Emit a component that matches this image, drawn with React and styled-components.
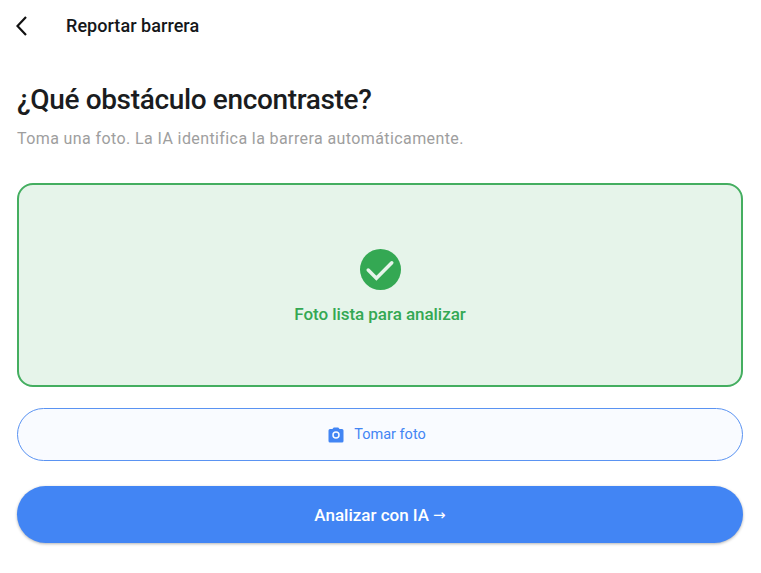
import React from 'react';
import styled, { createGlobalStyle } from 'styled-components';

const Global = createGlobalStyle`
  html, body { margin: 0; padding: 0; background: #fff; }
  body { font-family: Roboto, sans-serif; }
  * { box-sizing: border-box; }
`;

const Page = styled.div`
  width: 761px;
  height: 573px;
  overflow: hidden;
  display: flex;
  flex-direction: column;
  padding: 0 18px 0 17px;
  background: #fff;
`;

const TopBar = styled.header`
  height: 51px;
  display: flex;
  align-items: center;
  gap: 37px;
`;

const BackButton = styled.button`
  width: 12px;
  height: 24px;
  padding: 0;
  border: 0;
  background: none;
  color: #111;
`;

const BackIcon = styled.svg`
  display: block;
  margin-left: -1px;
`;

const TopTitle = styled.span`
  font-size: 18px;
  letter-spacing: 0.05px;
  font-weight: 500;
  color: #15171a;
`;

const Heading = styled.h1`
  margin: 30px 0 0;
  font-size: 28px;
  line-height: 38px;
  letter-spacing: -0.35px;
  font-weight: 500;
  color: #1a1c20;
`;

const Subtitle = styled.p`
  margin: 9px 0 0;
  font-size: 16px;
  line-height: 22px;
  letter-spacing: 0.4px;
  color: #9e9e9e;
`;

const PhotoBox = styled.div`
  margin-top: 33px;
  height: 204px;
  padding-top: 2px;
  border: 2px solid #44ae60;
  border-radius: 16px;
  background: #e6f4ea;
  display: flex;
  flex-direction: column;
  align-items: center;
  justify-content: center;
  gap: 14px;
`;

const PhotoLabel = styled.span`
  font-size: 17px;
  letter-spacing: -0.05px;
  font-weight: 500;
  color: #34a853;
`;

const Pill = styled.button`
  width: 100%;
  display: flex;
  align-items: center;
  justify-content: center;
  border-radius: 999px;
  font-family: inherit;
`;

const OutlineButton = styled(Pill)`
  margin-top: 21px;
  height: 53px;
  gap: 9px;
  padding: 0 7px 0 0;
  border: 1px solid #5a93f2;
  background: #f9fbff;
  color: #4285f4;
  font-size: 14.5px;
`;

const PrimaryButton = styled(Pill)`
  margin-top: 25px;
  height: 57px;
  gap: 4px;
  border: 0;
  background: #4285f4;
  color: #fff;
  font-size: 17px;
  font-weight: 500;
  box-shadow: 0 1px 3px rgba(0, 0, 0, 0.3);
`;

const Arrow = styled.span`
  font-family: "DejaVu Sans", sans-serif;
  font-size: 15px;
`;

export default function App() {
  return (
    <Page>
      <Global />
      <TopBar>
        <BackButton aria-label='Volver'>
          <BackIcon width='12' height='24' viewBox='0 0 12 24' fill='none'>
            <path d='M10 3 1.5 12l8.5 9' stroke='currentColor' strokeWidth='2.2' />
          </BackIcon>
        </BackButton>
        <TopTitle>Reportar barrera</TopTitle>
      </TopBar>
      <Heading>¿Qué obstáculo encontraste?</Heading>
      <Subtitle>Toma una foto. La IA identifica la barrera automáticamente.</Subtitle>
      <PhotoBox>
        <svg width='41' height='41' viewBox='0 0 40 40'>
          <circle cx='20' cy='20' r='20' fill='#34a853' />
          <path d='M8 20.5l8 8 15-15' fill='none' stroke='#e6f4ea' strokeWidth='3.4' strokeLinecap='round' />
        </svg>
        <PhotoLabel>Foto lista para analizar</PhotoLabel>
      </PhotoBox>
      <OutlineButton>
        <svg width='18' height='18' viewBox='0 0 24 24' fill='currentColor'>
          <path fillRule='evenodd' d='M9 2 7.2 4H4a2 2 0 0 0-2 2v14a2 2 0 0 0 2 2h16a2 2 0 0 0 2-2V6a2 2 0 0 0-2-2h-3.2L15 2H9zm3 15a5 5 0 1 1 0-10 5 5 0 0 1 0 10zm0-2a3 3 0 1 0 0-6 3 3 0 0 0 0 6z' />
        </svg>
        Tomar foto
      </OutlineButton>
      <PrimaryButton>Analizar con IA <Arrow>→</Arrow></PrimaryButton>
    </Page>
  );
}
